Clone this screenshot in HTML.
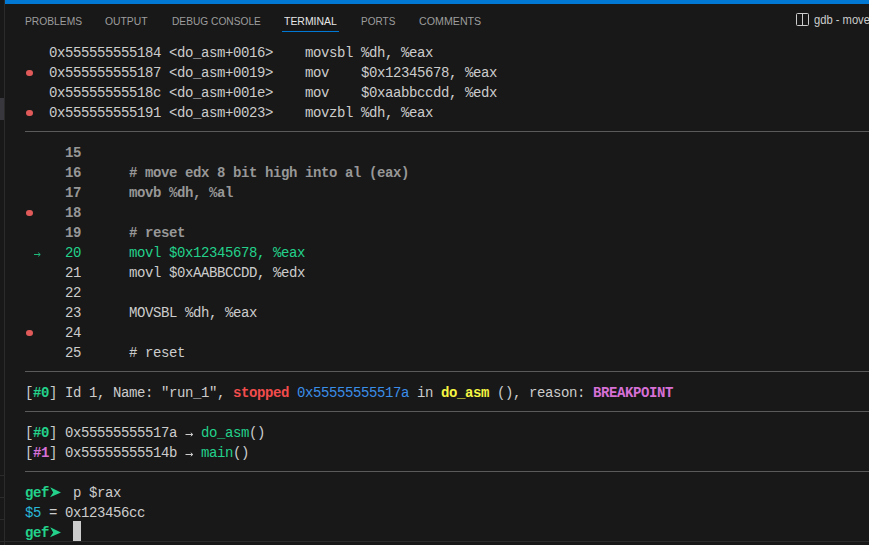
<!DOCTYPE html>
<html><head><meta charset="utf-8"><style>
html,body{margin:0;padding:0;}
body{width:869px;height:545px;background:#181818;position:relative;overflow:hidden;font-family:"Liberation Sans",sans-serif;}
.side{position:absolute;left:0;top:0;width:4px;height:545px;background:#181818;}
.vb{position:absolute;left:4px;top:0;width:1px;height:545px;background:#2b2b2b;}
.blue{position:absolute;left:5px;top:0;width:864px;height:4px;background:#0078d4;}
.tab{position:absolute;transform-origin:0 0;top:14px;font-size:11px;line-height:14px;color:#9d9d9d;white-space:nowrap;}
.tab.act{color:#e7e7e7;}
.ul{position:absolute;left:282px;top:31px;width:57px;height:1px;background:#0078d4;}
.t{position:absolute;height:20px;line-height:20px;font-family:"Liberation Mono",monospace;font-size:14px;letter-spacing:-0.4014px;white-space:pre;color:#cccccc;}
.b{font-weight:bold;}
.g{color:#979797;font-weight:bold;}
.gr{color:#23d18b;}
.rd{color:#f14c4c;}
.bl{color:#3b8eea;}
.ye{color:#f5f543;}
.mg{color:#d670d6;}
.cy{color:#29b8db;}
.sep{position:absolute;left:25px;width:844px;height:1px;background:#5a5a5a;}
.dot{position:absolute;left:26.25px;width:6.5px;height:6.5px;border-radius:50%;background:#e05a5a;}
.arr{position:absolute;left:33px;width:10px;height:20px;}
.ra,.pr{position:absolute;height:20px;}
.ra svg,.pr svg,.arr svg{display:block;}
.cur{position:absolute;width:8px;height:20px;background:#cccccc;}
.hl{position:absolute;left:0;width:4px;height:1px;background:#2b2b2b;}
.bot{position:absolute;left:0;top:541px;width:869px;height:1px;background:#2b2b2b;}
</style></head><body>
<div class="side"></div>
<div style="position:absolute;left:0;top:98px;width:4px;height:22px;background:#37373d"></div>
<div class="hl" style="top:475px"></div>
<div class="hl" style="top:497px"></div>
<div class="hl" style="top:519px"></div>
<div class="vb"></div>
<div class="blue"></div>
<div class="tab" style="left:25px;transform:scaleX(0.933)">PROBLEMS</div>
<div class="tab" style="left:105px;transform:scaleX(0.94)">OUTPUT</div>
<div class="tab" style="left:172px;transform:scaleX(0.926)">DEBUG CONSOLE</div>
<div class="tab act" style="left:284px;transform:scaleX(0.95)">TERMINAL</div>
<div class="tab" style="left:361px;transform:scaleX(0.91)">PORTS</div>
<div class="tab" style="left:419px;transform:scaleX(0.97)">COMMENTS</div>
<div class="ul"></div>
<svg style="position:absolute;left:795px;top:12px" width="15" height="15"><rect x="1.5" y="1.5" width="12" height="12" rx="1" fill="none" stroke="#cccccc" stroke-width="1"/><path d="M7.5 1.5V13.5" stroke="#cccccc" stroke-width="1"/></svg>
<div style="position:absolute;left:814px;top:12px;font-size:13px;line-height:16px;color:#cccccc;white-space:nowrap;transform:scaleX(0.86);transform-origin:0 0">gdb - move</div>
<div class="t " style="top:43px;left:49px">0x555555555184 &lt;do_asm+0016&gt;    movsbl %dh, %eax</div>
<div class="dot" style="top:69.75px"></div>
<div class="t " style="top:63px;left:49px">0x555555555187 &lt;do_asm+0019&gt;    mov    $0x12345678, %eax</div>
<div class="t " style="top:83px;left:49px">0x55555555518c &lt;do_asm+001e&gt;    mov    $0xaabbccdd, %edx</div>
<div class="dot" style="top:109.75px"></div>
<div class="t " style="top:103px;left:49px">0x555555555191 &lt;do_asm+0023&gt;    movzbl %dh, %eax</div>
<div class="sep" style="top:131px"></div>
<div class="t g" style="top:143px;left:65px">15</div>
<div class="t g" style="top:163px;left:65px">16</div>
<div class="t g" style="top:163px;left:129px"># move edx 8 bit high into al (eax)</div>
<div class="t g" style="top:183px;left:65px">17</div>
<div class="t g" style="top:183px;left:129px">movb %dh, %al</div>
<div class="dot" style="top:209.75px"></div>
<div class="t g" style="top:203px;left:65px">18</div>
<div class="t g" style="top:223px;left:65px">19</div>
<div class="t g" style="top:223px;left:129px"># reset</div>
<div class="arr" style="top:241px"><svg width="10" height="20"><path d="M1 13.5H7.2M5.2 11.6L7.2 13.5L5.2 15.4" stroke="#1fb87b" stroke-width="1" fill="none"/></svg></div>
<div class="t gr" style="top:243px;left:65px">20</div>
<div class="t gr" style="top:243px;left:129px">movl $0x12345678, %eax</div>
<div class="t " style="top:263px;left:65px">21</div>
<div class="t " style="top:263px;left:129px">movl $0xAABBCCDD, %edx</div>
<div class="t " style="top:283px;left:65px">22</div>
<div class="t " style="top:303px;left:65px">23</div>
<div class="t " style="top:303px;left:129px">MOVSBL %dh, %eax</div>
<div class="dot" style="top:329.75px"></div>
<div class="t " style="top:323px;left:65px">24</div>
<div class="t " style="top:343px;left:65px">25</div>
<div class="t " style="top:343px;left:129px"># reset</div>
<div class="sep" style="top:371px"></div>
<div class="t " style="top:383px;left:25px">[</div>
<div class="t gr b" style="top:383px;left:33px">#0</div>
<div class="t " style="top:383px;left:49px">] Id 1, Name: "run_1", </div>
<div class="t rd b" style="top:383px;left:233px">stopped</div>
<div class="t bl" style="top:383px;left:297px">0x55555555517a</div>
<div class="t " style="top:383px;left:417px">in</div>
<div class="t ye b" style="top:383px;left:441px">do_asm</div>
<div class="t " style="top:383px;left:497px">(), reason: </div>
<div class="t mg b" style="top:383px;left:593px">BREAKPOINT</div>
<div class="sep" style="top:411px"></div>
<div class="t " style="top:423px;left:25px">[</div>
<div class="t gr b" style="top:423px;left:33px">#0</div>
<div class="t " style="top:423px;left:49px">] 0x55555555517a </div>
<div class="ra" style="top:421px;left:185px"><svg width="16" height="20"><path d="M0.5 13.5H7.6M5.8 11.8L7.8 13.5L5.8 15.2" stroke="#cccccc" stroke-width="1" fill="none"/></svg></div>
<div class="t gr" style="top:423px;left:201px">do_asm</div>
<div class="t " style="top:423px;left:249px">()</div>
<div class="t " style="top:443px;left:25px">[</div>
<div class="t mg b" style="top:443px;left:33px">#1</div>
<div class="t " style="top:443px;left:49px">] 0x55555555514b </div>
<div class="ra" style="top:441px;left:185px"><svg width="16" height="20"><path d="M0.5 13.5H7.6M5.8 11.8L7.8 13.5L5.8 15.2" stroke="#cccccc" stroke-width="1" fill="none"/></svg></div>
<div class="t gr" style="top:443px;left:201px">main</div>
<div class="t " style="top:443px;left:233px">()</div>
<div class="sep" style="top:471px"></div>
<div class="t gr b" style="top:483px;left:25px">gef</div>
<div class="pr" style="top:481px;left:49px"><svg width="14" height="20"><path d="M1.2 6.2L12 11.4L1 16.2L4.2 11.4Z" fill="#23d18b"/></svg></div>
<div class="t " style="top:483px;left:73px">p $rax</div>
<div class="t cy" style="top:503px;left:25px">$5</div>
<div class="t " style="top:503px;left:41px"> = 0x123456cc</div>
<div class="t gr b" style="top:523px;left:25px">gef</div>
<div class="pr" style="top:521px;left:49px"><svg width="14" height="20"><path d="M1.2 6.2L12 11.4L1 16.2L4.2 11.4Z" fill="#23d18b"/></svg></div>
<div class="cur" style="top:521px;left:73px"></div>
<div class="bot"></div>
</body></html>
